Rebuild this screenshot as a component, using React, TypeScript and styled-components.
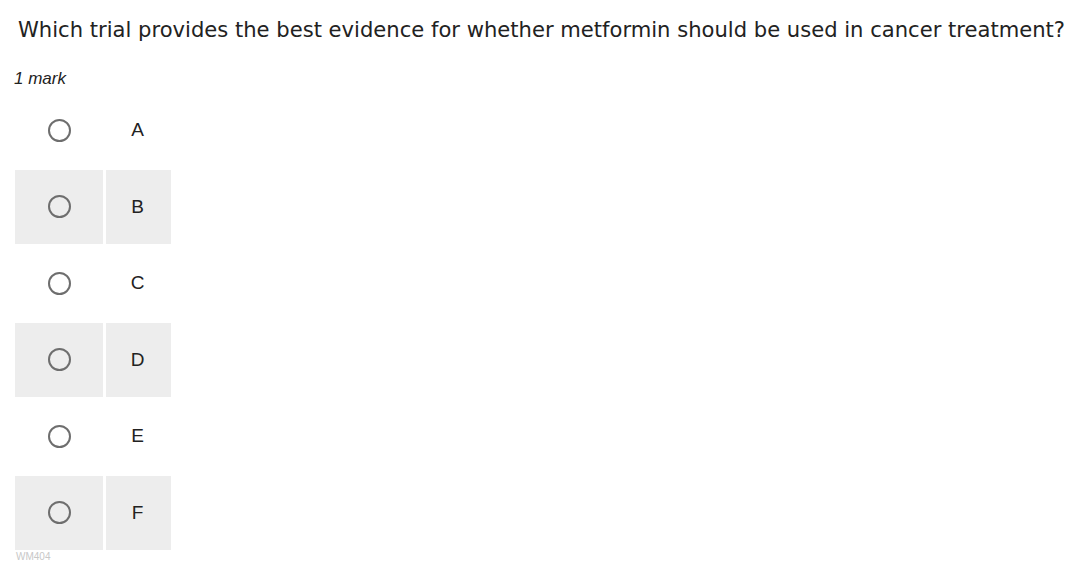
import React, { FC } from "react"
import styled, { createGlobalStyle } from "styled-components"

const GlobalStyle = createGlobalStyle`
  html, body {
    margin: 0;
    padding: 0;
    background: #ffffff;
    overflow: hidden;
  }
`

const Page = styled.div`
  width: 1080px;
  height: 563px;
  overflow: hidden;
  padding: 15px 0 0 14px;
  box-sizing: border-box;
`

const Question = styled.h1`
  margin: 0 0 0 4px;
  font-family: "DejaVu Sans", Verdana, sans-serif;
  font-weight: normal;
  font-size: 21.1px;
  line-height: 30px;
  color: #222;
  white-space: nowrap;
`

const Marks = styled.div`
  margin-top: 24px;
  font-family: "Liberation Sans", Arial, sans-serif;
  font-style: italic;
  font-size: 17px;
  line-height: 20px;
  color: #222;
`

const Options = styled.div`
  display: grid;
  grid-template-columns: 88px 65px;
  grid-auto-rows: 74px;
  column-gap: 3px;
  row-gap: 2.5px;
  margin: 4px 0 0 1px;
`

const Cell = styled.div<{ shaded?: boolean }>`
  display: flex;
  align-items: center;
  justify-content: center;
  background: ${ (props) => props.shaded ? "#ededed" : "transparent" };
`

const LetterCell = styled(Cell)`
  font-family: "Liberation Sans", Arial, sans-serif;
  font-size: 19px;
  color: #222;
  padding-right: 2px;
`

const Radio = styled.span`
  display: block;
  width: 19px;
  height: 19px;
  border: 2.5px solid #6e6e6e;
  border-radius: 50%;
`

const Footer = styled.div`
  margin-top: 1px;
  font-family: "Liberation Sans", Arial, sans-serif;
  font-size: 10px;
  line-height: 12px;
  color: #c8c8c8;
  padding-left: 2px;
`

const letters = ["A", "B", "C", "D", "E", "F"]

const App: FC = () => (
  <>
    <GlobalStyle />
    <Page>
      <Question>Which trial provides the best evidence for whether metformin should be used in cancer treatment?</Question>
      <Marks>1 mark</Marks>
      <Options>
        { letters.map((letter, i) => (
          <React.Fragment key={ letter }>
            <Cell shaded={ i % 2 === 1 }><Radio /></Cell>
            <LetterCell shaded={ i % 2 === 1 }>{ letter }</LetterCell>
          </React.Fragment>
        )) }
      </Options>
      <Footer>WM404</Footer>
    </Page>
  </>
)

export default App
